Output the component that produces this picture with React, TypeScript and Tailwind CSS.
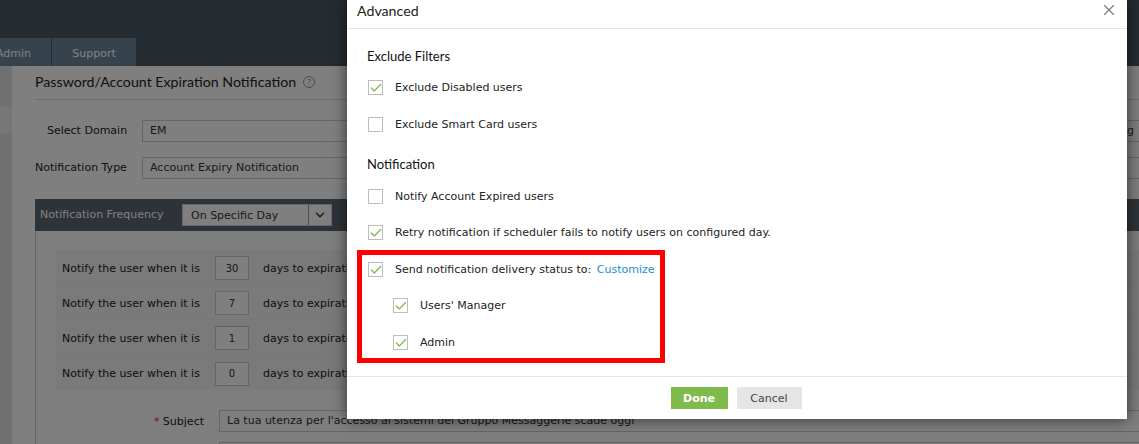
import { X, Check, ChevronDown } from "lucide-react";

const days = ["30", "7", "1", "0"];
const labelFont = "font-['DejaVu_Sans',sans-serif] text-[11px]";

function Tick({ on }: { on?: boolean }) {
  return (
    <span className="w-[15px] h-[15px] border border-[#bdbdbd] bg-white flex items-center justify-center shrink-0">
      {on && <Check size={14} strokeWidth={2.25} className="text-[#7fba4c] shrink-0" />}
    </span>
  );
}

function Option({ on, label, children }: { on?: boolean; label: string; children?: React.ReactNode }) {
  return (
    <div className={`flex items-center gap-[12px] h-[15px] ${labelFont} text-[#222]`}>
      <Tick on={on} />
      <span className="pt-[2px]">
        {label}
        {children}
      </span>
    </div>
  );
}

function App() {
  return (
    <div className="relative w-[1139px] h-[444px] overflow-hidden bg-white font-['DejaVu_Sans',sans-serif]">
      {/* page behind the dialog */}
      <div className="h-[66px] bg-[#4b5963] flex items-end">
        <div className="w-[51px] h-[28px] bg-[#6f8799] text-white text-[11px] flex items-center justify-end pr-[20px] pt-[5px] mr-[1px] overflow-hidden">
          Admin
        </div>
        <div className="w-[84px] h-[28px] bg-[#6f8799] text-white text-[11px] flex items-center justify-center pt-[5px]">
          Support
        </div>
      </div>
      <div className="flex h-[378px]">
        <div className="w-[12px] bg-[#dfe2e4] shrink-0 pt-[41px]">
          <div className="h-[26px] bg-[#eeeeee]" />
        </div>
        <div className="flex-1 pl-[23px]">
          <div className="h-[34px] border-b border-[#ddd] flex items-center gap-[7px] font-['Lato',sans-serif] text-[14.2px] text-[#222] pb-[1px]">
            Password/Account Expiration Notification
            <span className="w-[12px] h-[12px] rounded-full border border-[#999] text-[#888] text-[8px] flex items-center justify-center">
              ?
            </span>
          </div>
          <div className="flex items-center mt-[20px] h-[22px] text-[11px] text-[#222]">
            <span className="w-[107px] pl-[12px] leading-[18px]">Select Domain</span>
            <div className="flex-1 -mr-[20px] h-[22px] border border-[#ccc] pl-[7px] pr-[24px] flex items-center justify-between text-[#333]">
              <span>EM</span>
              <span>i g</span>
            </div>
          </div>
          <div className="flex items-center mt-[15px] h-[22px] text-[11px] text-[#222]">
            <span className="w-[107px]">Notification Type</span>
            <div className="flex-1 -mr-[20px] h-[22px] border border-[#ccc] pl-[7px] flex items-center text-[#333]">
              Account Expiry Notification
            </div>
          </div>
          <div className="mt-[20px] h-[32px] bg-[#5a6670] flex items-center pl-[5px] text-[11px] text-white">
            <span className="w-[142px]">Notification Frequency</span>
            <div className="w-[150px] h-[22px] border border-[#ccc] bg-white text-[#333] flex items-center justify-between">
              <span className="pl-[8px] pt-[2px]">On Specific Day</span>
              <span className="w-[23px] h-full border-l border-[#999] flex items-center justify-center">
                <ChevronDown size={14} strokeWidth={2.5} className="text-[#333]" />
              </span>
            </div>
          </div>
          <div className="h-[213px] border-l border-[#ccc] pl-[20px] pt-[19px] bg-[#fdfdfd]">
            <div className="bg-[#f4f4f4] text-[11px] text-[#222]">
              {days.map((d) => (
                <div key={d} className="h-[35px] flex items-center pl-[6px] pt-[2px] border-b border-[#eee] last:border-b-0">
                  <span className="w-[153px] pt-[2px]">Notify the user when it is</span>
                  <span className="w-[34px] h-[24px] border border-[#ccc] bg-white flex items-center justify-center text-[10px] text-[#333]">
                    {d}
                  </span>
                  <span className="ml-[14px] pt-[2px]">days to expiration</span>
                </div>
              ))}
            </div>
            <div className="flex items-center mt-[20px] h-[22px] text-[11px] text-[#222]">
              <span className="w-[163px] text-right pr-[15px] pt-[2px]">
                <span className="text-[#e02020] align-top">*</span> Subject
              </span>
              <div className="flex-1 -mr-[20px] h-[22px] border border-[#ccc] pl-[7px] pt-[1px] flex items-center text-[#333]">
                La tua utenza per l'accesso ai sistemi del Gruppo Messaggerie scade oggi
              </div>
            </div>
            <div className="ml-[163px] -mr-[20px] mt-[10px] h-[22px] border border-[#ccc]" />
          </div>
        </div>
      </div>

      {/* dim layer */}
      <div className="absolute inset-0 bg-black/50" />

      {/* dialog */}
      <div className="absolute left-[347px] top-0 w-[780px] h-[419px] bg-white shadow-[0_0_14px_rgba(0,0,0,0.6)] flex flex-col">
        <div className="h-[29px] border-b border-[#e5e5e5] flex items-center justify-between pl-[10px] pr-[9px] pb-[6px] font-['Lato',sans-serif] text-[14.2px] text-[#222]">
          Advanced
          <X size={18} strokeWidth={1.5} className="text-[#777] mb-[2px]" />
        </div>
        <div className="flex-1 relative pl-[21px]">
          <div className="font-['Lato',sans-serif] text-[13px] text-[#111] -ml-[1px] mt-[18px] h-[18px] leading-[18px]">
            Exclude Filters
          </div>
          <div className="mt-[15px] flex flex-col gap-[22px]">
            <Option on label="Exclude Disabled users" />
            <Option label="Exclude Smart Card users" />
          </div>
          <div className="font-['Lato',sans-serif] text-[13px] text-[#111] -ml-[1px] mt-[23px] h-[18px] leading-[18px]">
            Notification
          </div>
          <div className="mt-[16px] flex flex-col gap-[21px]">
            <Option label="Notify Account Expired users" />
            <Option on label="Retry notification if scheduler fails to notify users on configured day." />
          </div>
          <div className="absolute left-[10px] top-[221px] w-[308px] h-[113px] border-[5px] border-[#ff0000] pl-[6px] pt-[7px] flex flex-col gap-[21px]">
            <Option on label="Send notification delivery status to: ">
              <span className="text-[#1a8fd1] ml-[2px]">Customize</span>
            </Option>
            <div className="ml-[25px] flex flex-col gap-[22px]">
              <Option on label="Users' Manager" />
              <Option on label="Admin" />
            </div>
          </div>
        </div>
        <div className="h-[43px] border-t border-[#e5e5e5] flex items-center justify-center gap-[9px] pb-[1px] pr-[2px] text-[11px]">
          <span className="w-[57px] h-[22px] bg-[#7fba4c] text-white font-bold flex items-center justify-center pt-[3px]">
            Done
          </span>
          <span className="w-[65px] h-[22px] bg-[#e5e5e5] text-[#444] flex items-center justify-center pt-[3px]">
            Cancel
          </span>
        </div>
      </div>
    </div>
  );
}

export default App;
